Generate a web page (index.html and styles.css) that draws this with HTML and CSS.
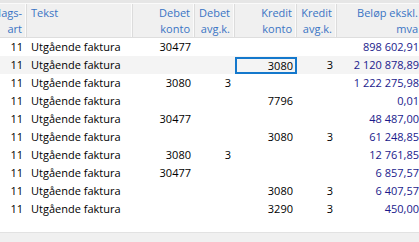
FILE: index.html
```html
<!DOCTYPE html>
<html lang="no">
<head>
<meta charset="utf-8">
<link rel="stylesheet" href="styles.css">
</head>
<body>
<div class="view">
  <div class="topstrip"></div>
  <div class="row head">
    <div class="c num clip"><span>Bilags-<br>art</span></div>
    <div class="c txt">Tekst</div>
    <div class="c num">Debet<br>konto</div>
    <div class="c num">Debet<br>avg.k.</div>
    <div class="c num">Kredit<br>konto</div>
    <div class="c num">Kredit<br>avg.k.</div>
    <div class="c num">Beløp ekskl.<br>mva</div>
  </div>
  <div class="body">
    <div class="row"><div class="c num">11</div><div class="c txt">Utgående faktura</div><div class="c num">30477</div><div class="c num"></div><div class="c num"></div><div class="c num"></div><div class="c num amt">898 602,91</div></div>
    <div class="row sel"><div class="c num">11</div><div class="c txt">Utgående faktura</div><div class="c num"></div><div class="c num"></div><div class="c num focus">3080</div><div class="c num">3</div><div class="c num amt">2 120 878,89</div></div>
    <div class="row"><div class="c num">11</div><div class="c txt">Utgående faktura</div><div class="c num">3080</div><div class="c num">3</div><div class="c num"></div><div class="c num"></div><div class="c num amt">1 222 275,98</div></div>
    <div class="row"><div class="c num">11</div><div class="c txt">Utgående faktura</div><div class="c num"></div><div class="c num"></div><div class="c num">7796</div><div class="c num"></div><div class="c num amt">0,01</div></div>
    <div class="row"><div class="c num">11</div><div class="c txt">Utgående faktura</div><div class="c num">30477</div><div class="c num"></div><div class="c num"></div><div class="c num"></div><div class="c num amt">48 487,00</div></div>
    <div class="row"><div class="c num">11</div><div class="c txt">Utgående faktura</div><div class="c num"></div><div class="c num"></div><div class="c num">3080</div><div class="c num">3</div><div class="c num amt">61 248,85</div></div>
    <div class="row"><div class="c num">11</div><div class="c txt">Utgående faktura</div><div class="c num">3080</div><div class="c num">3</div><div class="c num"></div><div class="c num"></div><div class="c num amt">12 761,85</div></div>
    <div class="row"><div class="c num">11</div><div class="c txt">Utgående faktura</div><div class="c num">30477</div><div class="c num"></div><div class="c num"></div><div class="c num"></div><div class="c num amt">6 857,57</div></div>
    <div class="row"><div class="c num">11</div><div class="c txt">Utgående faktura</div><div class="c num"></div><div class="c num"></div><div class="c num">3080</div><div class="c num">3</div><div class="c num amt">6 407,57</div></div>
    <div class="row"><div class="c num">11</div><div class="c txt">Utgående faktura</div><div class="c num"></div><div class="c num"></div><div class="c num">3290</div><div class="c num">3</div><div class="c num amt">450,00</div></div>
  </div>
  <div class="hscroll"></div>
</div>
</body>
</html>
```
FILE: styles.css
```css
html, body {
  margin: 0;
  padding: 0;
  background: #ffffff;
}
body {
  width: 419px;
  height: 242px;
  overflow: hidden;
  font-family: "Open Sans", "Noto Sans", sans-serif;
  font-size: 11px;
  color: #000;
}
.view {
  display: flex;
  flex-direction: column;
  width: 419px;
  height: 242px;
}
.topstrip {
  height: 3px;
  background: #e6e6e6;
  border-bottom: 1px solid #fafafa;
}
.row {
  display: grid;
  grid-template-columns: 27px 106px 62px 40px 62px 40px 86px;
  width: 423px;
  height: 18px;
  line-height: 18px;
}
.row.head {
  height: 33px;
  line-height: 16px;
  background: #f0f0f0;
  border-bottom: 1px solid #dedede;
  color: #3a74c4;
}
.head .c {
  padding-top: 1px;
  border-right: 1px solid #dcdcdc;
  box-shadow: inset -1px 0 0 #fbfbfb;
}
.c {
  white-space: nowrap;
  overflow: hidden;
  box-sizing: border-box;
}
.c.txt {
  padding-left: 4px;
  text-align: left;
}
.c.num {
  padding-right: 4px;
  text-align: right;
}
.clip {
  display: flex;
  justify-content: flex-end;
}
.clip span {
  display: block;
  text-align: right;
}
.body {
  flex: 1;
}
.row.sel {
  background: #f4f4f4;
}
.focus {
  border: 2px solid #1478cc;
  line-height: 14px;
  padding-right: 2px !important;
  height: 17px;
  margin-top: 1px;
}
.amt {
  color: #1a1a8c;
}
.hscroll {
  height: 9px;
  background: #f0f0f0;
  border-top: 1px solid #e2e2e2;
}
```
